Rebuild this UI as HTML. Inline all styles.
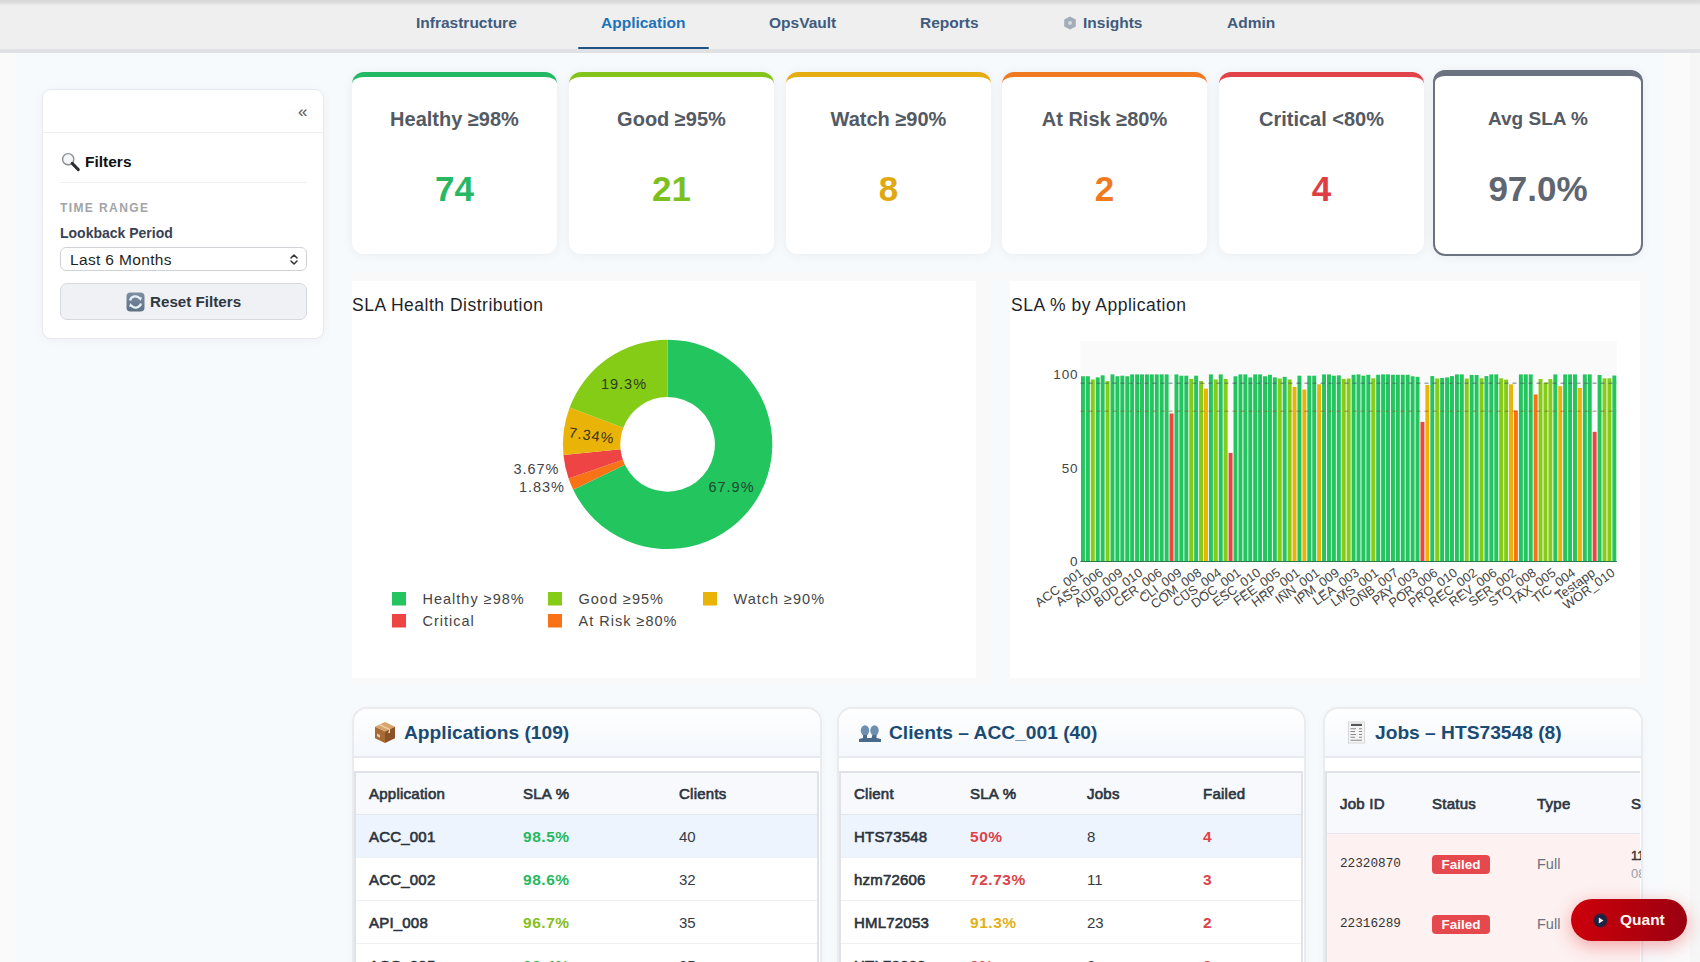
<!DOCTYPE html>
<html><head><meta charset="utf-8"><style>
*{box-sizing:border-box;margin:0;padding:0}
html,body{width:1700px;height:962px;overflow:hidden;background:#fafafa;font-family:"Liberation Sans",sans-serif;color:#222}
.abs{position:absolute}
#main{position:absolute;left:16px;top:0;width:1648px;height:962px;background:#f7fafd}
#nav{position:absolute;left:0;top:0;width:1700px;height:53px;background:linear-gradient(#d8d8d8 0,#dbdbdb 2px,#ececec 5px,#efefef 7px);border-bottom:4px solid #dfe1e4}
.tab{position:absolute;top:14px;font-size:15.5px;font-weight:bold;color:#3f5b7d;white-space:nowrap;line-height:18px}
.tab.active{color:#1c73b9}
#uline{position:absolute;left:578px;top:46.5px;width:131px;height:2.6px;background:#1e5485;border-radius:2px}
#side{position:absolute;left:42px;top:89px;width:282px;height:250px;background:#fff;border:1px solid #e6e9ed;border-radius:9px;box-shadow:0 2px 12px rgba(0,0,0,.04)}
.kpi{position:absolute;top:72px;width:205px;height:182px;background:#fff;border-radius:12px;border-top:5px solid #22c55e;box-shadow:0 1px 12px rgba(0,0,0,.06)}
.kpi .t{position:absolute;left:0;right:0;top:31px;text-align:center;font-size:20px;font-weight:bold;color:#535a64;white-space:nowrap;line-height:23px}
.kpi .v{position:absolute;left:0;right:0;top:92px;text-align:center;font-size:35px;font-weight:bold;white-space:nowrap;line-height:39px}
.panel{position:absolute;background:#fff}
.ptitle{position:absolute;font-size:17.5px;letter-spacing:0.5px;color:#1f1f2a;white-space:nowrap;line-height:20px}
.card{position:absolute;top:707px;height:300px;background:#fff;border:2px solid #e9ebee;border-radius:15px;overflow:hidden;box-shadow:0 2px 8px rgba(0,0,0,.03)}
.chead{position:absolute;left:0;top:0;right:0;height:49px;background:linear-gradient(#fefeff,#f4f8fc);border-bottom:2px solid #e6e9ed}
.ctitle{position:absolute;left:50px;top:13px;font-size:19.2px;font-weight:bold;color:#1b4a73;white-space:nowrap;line-height:22px}
.tbl{position:absolute;left:0;top:62px;right:1px;height:260px;border-top:2px solid #dfe3e8;border-left:2px solid #dfe3e8;border-right:2px solid #dfe3e8}
.th{position:absolute;left:0;right:0;top:0;height:42px;background:#f7f9fc;border-bottom:1px solid #e3e7ec}
.tr{position:absolute;left:0;right:0;height:43px;border-bottom:1px solid #eef1f4;background:#fff}
.tr.sel{background:#edf4fd}
.c{position:absolute;top:13px;font-size:15px;line-height:17px;color:#333b46;white-space:nowrap}
.th .c{font-weight:normal;-webkit-text-stroke:0.65px #2d3540;letter-spacing:0.25px;color:#2d3540;top:12px}
.badge{position:absolute;height:19px;width:58px;background:#e5484d;border-radius:4px;color:#fff;font-weight:bold;font-size:13.5px;line-height:19px;text-align:center}
#quant{position:absolute;left:1571px;top:899px;width:116px;height:42px;border-radius:21px;background:linear-gradient(90deg,#cc000b,#b0000e 60%,#9a0010);box-shadow:0 5px 18px rgba(235,40,40,.38)}
</style></head>
<body>
<div id="main"></div><div class="abs" style="left:1690px;top:0;width:10px;height:962px;background:#f6f6f6"></div>
<div id="nav">
  <div class="tab" style="left:416px">Infrastructure</div>
  <div class="tab active" style="left:601px">Application</div>
  <div class="tab" style="left:769px">OpsVault</div>
  <div class="tab" style="left:920px">Reports</div>
  <svg class="abs" style="left:1063px;top:15.5px" width="14" height="14" viewBox="0 0 14 14"><path d="M7 0.5 L12.8 3.6 L12.8 10.4 L7 13.5 L1.2 10.4 L1.2 3.6 Z" fill="#a3adba"/><circle cx="7" cy="7" r="2" fill="#d3d9e0"/></svg>
  <div class="tab" style="left:1083px">Insights</div>
  <div class="tab" style="left:1227px">Admin</div>
  <div id="uline"></div>
</div>
<div id="side">
  <div class="abs" style="left:255px;top:12px;font-size:17px;color:#555;line-height:20px">&laquo;</div>
  <div class="abs" style="left:0;top:42px;width:280px;height:1px;background:#eef0f2"></div>
  <svg class="abs" style="left:18px;top:62px" width="20" height="20" viewBox="0 0 20 20">
    <circle cx="7.2" cy="7.2" r="5.6" fill="#f4f6f8" stroke="#8a8f95" stroke-width="1.4"/>
    <path d="M11.2 11.4 L17.3 17.6" stroke="#2b2f33" stroke-width="3" stroke-linecap="round"/>
  </svg>
  <div class="abs" style="left:42px;top:63px;font-size:15.5px;font-weight:bold;color:#111;line-height:18px">Filters</div>
  <div class="abs" style="left:17px;top:92px;width:247px;height:1px;background:#eef0f2"></div>
  <div class="abs" style="left:17px;top:111px;font-size:12px;font-weight:bold;color:#a2a4a8;letter-spacing:1.4px;line-height:14px">TIME RANGE</div>
  <div class="abs" style="left:17px;top:135px;font-size:14px;font-weight:bold;color:#374151;line-height:16px">Lookback Period</div>
  <div class="abs" style="left:17px;top:157px;width:247px;height:24px;border:1px solid #cfd3d8;border-radius:6px;background:#fff">
    <div class="abs" style="left:9px;top:2.5px;font-size:15.5px;letter-spacing:0.35px;color:#1f1f1f;line-height:17px">Last 6 Months</div>
    <svg class="abs" style="left:228px;top:5px" width="10" height="13" viewBox="0 0 10 13"><path d="M2 5 L5 2 L8 5 M2 8 L5 11 L8 8" fill="none" stroke="#333" stroke-width="1.5" stroke-linecap="round" stroke-linejoin="round"/></svg>
  </div>
  <div class="abs" style="left:17px;top:193px;width:247px;height:37px;border:1px solid #d6dade;border-radius:7px;background:#eff1f4">
    <svg class="abs" style="left:65px;top:8px" width="19" height="20" viewBox="0 0 19 20">
      <defs><linearGradient id="rg" x1="0" y1="0" x2="0" y2="1"><stop offset="0" stop-color="#7d8ea2"/><stop offset="1" stop-color="#5f7185"/></linearGradient></defs>
      <rect x="0.5" y="0.5" width="18" height="19" rx="4" fill="url(#rg)"/>
      <path d="M4 8.5 A5.5 5.5 0 0 1 14 7" fill="none" stroke="#e8f0f8" stroke-width="2.2"/>
      <path d="M15 11.5 A5.5 5.5 0 0 1 5 13" fill="none" stroke="#e8f0f8" stroke-width="2.2"/>
      <path d="M12 5 L16 5.5 L14.5 9 Z M7 15 L3 14.5 L4.5 11 Z" fill="#e8f0f8"/>
    </svg>
    <div class="abs" style="left:89px;top:9px;font-size:15.2px;font-weight:bold;color:#2f3742;line-height:17px">Reset Filters</div>
  </div>
</div>
<div class="kpi" style="left:352px;border-top-color:#22b864"><div class="t">Healthy ≥98%</div><div class="v" style="color:#27b862">74</div></div>
<div class="kpi" style="left:569px;border-top-color:#84c41a"><div class="t">Good ≥95%</div><div class="v" style="color:#7cc01e">21</div></div>
<div class="kpi" style="left:786px;border-top-color:#e5ad12"><div class="t">Watch ≥90%</div><div class="v" style="color:#e0a80c">8</div></div>
<div class="kpi" style="left:1002px;border-top-color:#f07a22"><div class="t">At Risk ≥80%</div><div class="v" style="color:#ef7a1f">2</div></div>
<div class="kpi" style="left:1219px;border-top-color:#e0434a"><div class="t">Critical &lt;80%</div><div class="v" style="color:#de3d44">4</div></div>
<div class="kpi" style="left:1433px;top:70px;width:210px;height:186px;border:2px solid #6b7280;border-top:6px solid #6b7280"><div class="t" style="top:30.5px;font-size:19px">Avg SLA %</div><div class="v" style="top:93px;color:#5f6670">97.0%</div></div>
<div class="abs" style="left:352px;top:271px;width:1296px;height:416px;background:linear-gradient(#f9f9f9 0,#f9f9f9 410px,#f7fafd 416px)"></div>
<div class="abs" style="left:992px;top:281px;width:16px;height:406px;background:#f7fafd"></div>
<div class="abs" style="left:1648px;top:271px;width:16px;height:416px;background:#f7fafd"></div>
<div class="panel" style="left:352px;top:281px;width:624px;height:397px"><div class="abs" style="left:0;top:1px"><svg class="abs" style="left:0;top:0" width="626" height="394" viewBox="0 0 626 394"><path d="M315.60 57.70 A104.7 104.7 0 1 1 221.18 207.63 L272.94 182.83 A47.3 47.3 0 1 0 315.60 115.10 Z" fill="#22c55e" stroke="#fff" stroke-width="0"/><path d="M221.18 207.63 A104.7 104.7 0 0 1 216.60 196.47 L270.87 177.79 A47.3 47.3 0 0 0 272.94 182.83 Z" fill="#f97316" stroke="#fff" stroke-width="0"/><path d="M216.60 196.47 A104.7 104.7 0 0 1 211.43 172.94 L268.54 167.16 A47.3 47.3 0 0 0 270.87 177.79 Z" fill="#ef4444" stroke="#fff" stroke-width="0"/><path d="M211.43 172.94 A104.7 104.7 0 0 1 217.62 125.49 L271.34 145.73 A47.3 47.3 0 0 0 268.54 167.16 Z" fill="#eab308" stroke="#fff" stroke-width="0"/><path d="M217.62 125.49 A104.7 104.7 0 0 1 315.60 57.70 L315.60 115.10 A47.3 47.3 0 0 0 271.34 145.73 Z" fill="#84cc16" stroke="#fff" stroke-width="0"/><text x="272" y="106.5" text-anchor="middle" fill="#2f3a1f" style="font-family:Liberation Sans,sans-serif;font-size:14.5px;letter-spacing:1.0px">19.3%</text><text x="239" y="158.5" text-anchor="middle" fill="#3a3210" style="font-family:Liberation Sans,sans-serif;font-size:14.5px;letter-spacing:1.0px" transform="rotate(8 239 158.5)">7.34%</text><text x="207.5" y="191.5" text-anchor="end" fill="#444" style="font-family:Liberation Sans,sans-serif;font-size:14.5px;letter-spacing:1.0px">3.67%</text><text x="213" y="209.5" text-anchor="end" fill="#444" style="font-family:Liberation Sans,sans-serif;font-size:14.5px;letter-spacing:1.0px">1.83%</text><text x="379.5" y="210" text-anchor="middle" fill="#1f4a2e" style="font-family:Liberation Sans,sans-serif;font-size:14.5px;letter-spacing:1.0px">67.9%</text><rect x="40" y="310" width="14" height="13.5" fill="#22c55e"/><text x="70.5" y="322.3" text-anchor="start" fill="#444" style="font-family:Liberation Sans,sans-serif;font-size:14.5px;letter-spacing:1.0px">Healthy ≥98%</text><rect x="196" y="310" width="14" height="13.5" fill="#84cc16"/><text x="226.5" y="322.3" text-anchor="start" fill="#444" style="font-family:Liberation Sans,sans-serif;font-size:14.5px;letter-spacing:1.0px">Good ≥95%</text><rect x="351" y="310" width="14" height="13.5" fill="#eab308"/><text x="381.5" y="322.3" text-anchor="start" fill="#444" style="font-family:Liberation Sans,sans-serif;font-size:14.5px;letter-spacing:1.0px">Watch ≥90%</text><rect x="40" y="332" width="14" height="13.5" fill="#ef4444"/><text x="70.5" y="344.3" text-anchor="start" fill="#444" style="font-family:Liberation Sans,sans-serif;font-size:14.5px;letter-spacing:1.0px">Critical</text><rect x="196" y="332" width="14" height="13.5" fill="#f97316"/><text x="226.5" y="344.3" text-anchor="start" fill="#444" style="font-family:Liberation Sans,sans-serif;font-size:14.5px;letter-spacing:1.0px">At Risk ≥80%</text></svg></div><div class="ptitle" style="left:0;top:14px">SLA Health Distribution</div></div>
<div class="panel" style="left:1010px;top:281px;width:630px;height:397px"><div class="abs" style="left:0;top:1px"><svg class="abs" style="left:0;top:0" width="631" height="394" viewBox="0 0 631 394"><rect x="70.5" y="59" width="536.3" height="220.5" fill="#fafafa"/><rect x="70.99" y="94.27" width="3.94" height="185.23" fill="#22c55e"/><rect x="75.91" y="94.27" width="3.94" height="185.23" fill="#22c55e"/><rect x="80.83" y="97.45" width="3.94" height="182.05" fill="#84cc16"/><rect x="85.75" y="95.39" width="3.94" height="184.11" fill="#22c55e"/><rect x="90.67" y="93.34" width="3.94" height="186.16" fill="#22c55e"/><rect x="95.59" y="99.14" width="3.94" height="180.36" fill="#84cc16"/><rect x="100.51" y="92.40" width="3.94" height="187.10" fill="#22c55e"/><rect x="105.43" y="94.27" width="3.94" height="185.23" fill="#22c55e"/><rect x="110.35" y="93.71" width="3.94" height="185.79" fill="#22c55e"/><rect x="115.27" y="94.27" width="3.94" height="185.23" fill="#22c55e"/><rect x="120.19" y="92.40" width="3.94" height="187.10" fill="#22c55e"/><rect x="125.11" y="92.40" width="3.94" height="187.10" fill="#22c55e"/><rect x="130.03" y="92.40" width="3.94" height="187.10" fill="#22c55e"/><rect x="134.95" y="92.40" width="3.94" height="187.10" fill="#22c55e"/><rect x="139.87" y="92.40" width="3.94" height="187.10" fill="#22c55e"/><rect x="144.79" y="92.40" width="3.94" height="187.10" fill="#22c55e"/><rect x="149.71" y="92.40" width="3.94" height="187.10" fill="#22c55e"/><rect x="154.64" y="92.40" width="3.94" height="187.10" fill="#22c55e"/><rect x="159.56" y="131.50" width="3.94" height="148.00" fill="#ef4444"/><rect x="164.48" y="92.40" width="3.94" height="187.10" fill="#22c55e"/><rect x="169.40" y="93.71" width="3.94" height="185.79" fill="#22c55e"/><rect x="174.32" y="93.71" width="3.94" height="185.79" fill="#22c55e"/><rect x="179.24" y="96.89" width="3.94" height="182.61" fill="#84cc16"/><rect x="184.16" y="93.71" width="3.94" height="185.79" fill="#22c55e"/><rect x="189.08" y="99.14" width="3.94" height="180.36" fill="#84cc16"/><rect x="194.00" y="106.62" width="3.94" height="172.88" fill="#eab308"/><rect x="198.92" y="92.40" width="3.94" height="187.10" fill="#22c55e"/><rect x="203.84" y="97.45" width="3.94" height="182.05" fill="#84cc16"/><rect x="208.76" y="92.40" width="3.94" height="187.10" fill="#22c55e"/><rect x="213.68" y="96.89" width="3.94" height="182.61" fill="#84cc16"/><rect x="218.60" y="170.98" width="3.94" height="108.52" fill="#ef4444"/><rect x="223.52" y="94.27" width="3.94" height="185.23" fill="#22c55e"/><rect x="228.44" y="92.40" width="3.94" height="187.10" fill="#22c55e"/><rect x="233.36" y="92.40" width="3.94" height="187.10" fill="#22c55e"/><rect x="238.28" y="95.39" width="3.94" height="184.11" fill="#22c55e"/><rect x="243.20" y="92.40" width="3.94" height="187.10" fill="#22c55e"/><rect x="248.12" y="92.40" width="3.94" height="187.10" fill="#22c55e"/><rect x="253.04" y="94.27" width="3.94" height="185.23" fill="#22c55e"/><rect x="257.96" y="92.77" width="3.94" height="186.73" fill="#22c55e"/><rect x="262.88" y="95.39" width="3.94" height="184.11" fill="#22c55e"/><rect x="267.80" y="96.52" width="3.94" height="182.98" fill="#84cc16"/><rect x="272.72" y="94.83" width="3.94" height="184.67" fill="#22c55e"/><rect x="277.64" y="97.45" width="3.94" height="182.05" fill="#84cc16"/><rect x="282.56" y="104.94" width="3.94" height="174.56" fill="#eab308"/><rect x="287.48" y="93.71" width="3.94" height="185.79" fill="#22c55e"/><rect x="292.40" y="107.56" width="3.94" height="171.94" fill="#eab308"/><rect x="297.32" y="93.71" width="3.94" height="185.79" fill="#22c55e"/><rect x="302.24" y="93.71" width="3.94" height="185.79" fill="#22c55e"/><rect x="307.16" y="102.32" width="3.94" height="177.18" fill="#eab308"/><rect x="312.08" y="92.40" width="3.94" height="187.10" fill="#22c55e"/><rect x="317.00" y="92.40" width="3.94" height="187.10" fill="#22c55e"/><rect x="321.92" y="93.71" width="3.94" height="185.79" fill="#22c55e"/><rect x="326.84" y="93.34" width="3.94" height="186.16" fill="#22c55e"/><rect x="331.76" y="96.89" width="3.94" height="182.61" fill="#84cc16"/><rect x="336.68" y="96.52" width="3.94" height="182.98" fill="#84cc16"/><rect x="341.60" y="92.77" width="3.94" height="186.73" fill="#22c55e"/><rect x="346.52" y="92.40" width="3.94" height="187.10" fill="#22c55e"/><rect x="351.44" y="93.71" width="3.94" height="185.79" fill="#22c55e"/><rect x="356.36" y="92.77" width="3.94" height="186.73" fill="#22c55e"/><rect x="361.28" y="96.33" width="3.94" height="183.17" fill="#84cc16"/><rect x="366.20" y="92.77" width="3.94" height="186.73" fill="#22c55e"/><rect x="371.12" y="92.40" width="3.94" height="187.10" fill="#22c55e"/><rect x="376.04" y="92.40" width="3.94" height="187.10" fill="#22c55e"/><rect x="380.96" y="92.77" width="3.94" height="186.73" fill="#22c55e"/><rect x="385.88" y="92.77" width="3.94" height="186.73" fill="#22c55e"/><rect x="390.80" y="92.77" width="3.94" height="186.73" fill="#22c55e"/><rect x="395.72" y="92.77" width="3.94" height="186.73" fill="#22c55e"/><rect x="400.64" y="94.27" width="3.94" height="185.23" fill="#22c55e"/><rect x="405.56" y="94.83" width="3.94" height="184.67" fill="#22c55e"/><rect x="410.48" y="139.92" width="3.94" height="139.58" fill="#ef4444"/><rect x="415.40" y="103.06" width="3.94" height="176.44" fill="#eab308"/><rect x="420.33" y="94.08" width="3.94" height="185.42" fill="#22c55e"/><rect x="425.25" y="96.52" width="3.94" height="182.98" fill="#84cc16"/><rect x="430.17" y="95.95" width="3.94" height="183.55" fill="#22c55e"/><rect x="435.09" y="95.39" width="3.94" height="184.11" fill="#22c55e"/><rect x="440.01" y="94.08" width="3.94" height="185.42" fill="#22c55e"/><rect x="444.93" y="92.40" width="3.94" height="187.10" fill="#22c55e"/><rect x="449.85" y="92.40" width="3.94" height="187.10" fill="#22c55e"/><rect x="454.77" y="96.52" width="3.94" height="182.98" fill="#84cc16"/><rect x="459.69" y="92.96" width="3.94" height="186.54" fill="#22c55e"/><rect x="464.61" y="92.96" width="3.94" height="186.54" fill="#22c55e"/><rect x="469.53" y="96.33" width="3.94" height="183.17" fill="#84cc16"/><rect x="474.45" y="94.08" width="3.94" height="185.42" fill="#22c55e"/><rect x="479.37" y="92.40" width="3.94" height="187.10" fill="#22c55e"/><rect x="484.29" y="92.40" width="3.94" height="187.10" fill="#22c55e"/><rect x="489.21" y="96.33" width="3.94" height="183.17" fill="#84cc16"/><rect x="494.13" y="97.64" width="3.94" height="181.86" fill="#84cc16"/><rect x="499.05" y="102.32" width="3.94" height="177.18" fill="#eab308"/><rect x="503.97" y="128.51" width="3.94" height="150.99" fill="#f97316"/><rect x="508.89" y="92.40" width="3.94" height="187.10" fill="#22c55e"/><rect x="513.81" y="92.40" width="3.94" height="187.10" fill="#22c55e"/><rect x="518.73" y="92.40" width="3.94" height="187.10" fill="#22c55e"/><rect x="523.65" y="112.42" width="3.94" height="167.08" fill="#f97316"/><rect x="528.57" y="97.08" width="3.94" height="182.42" fill="#84cc16"/><rect x="533.49" y="100.63" width="3.94" height="178.87" fill="#84cc16"/><rect x="538.41" y="97.08" width="3.94" height="182.42" fill="#84cc16"/><rect x="543.33" y="92.40" width="3.94" height="187.10" fill="#22c55e"/><rect x="548.25" y="104.19" width="3.94" height="175.31" fill="#eab308"/><rect x="553.17" y="92.40" width="3.94" height="187.10" fill="#22c55e"/><rect x="558.09" y="92.40" width="3.94" height="187.10" fill="#22c55e"/><rect x="563.01" y="92.40" width="3.94" height="187.10" fill="#22c55e"/><rect x="567.93" y="105.87" width="3.94" height="173.63" fill="#eab308"/><rect x="572.85" y="92.40" width="3.94" height="187.10" fill="#22c55e"/><rect x="577.77" y="92.40" width="3.94" height="187.10" fill="#22c55e"/><rect x="582.69" y="149.84" width="3.94" height="129.66" fill="#ef4444"/><rect x="587.61" y="92.96" width="3.94" height="186.54" fill="#22c55e"/><rect x="592.53" y="96.33" width="3.94" height="183.17" fill="#84cc16"/><rect x="597.45" y="96.33" width="3.94" height="183.17" fill="#84cc16"/><rect x="602.37" y="93.52" width="3.94" height="185.98" fill="#22c55e"/><line x1="70.5" x2="606.8" y1="101.19999999999999" y2="101.19999999999999" stroke="#4a5060" stroke-opacity="0.5" stroke-width="1.6" stroke-dasharray="4 4"/><line x1="70.5" x2="606.8" y1="129.3" y2="129.3" stroke="#8a5a2a" stroke-opacity="0.45" stroke-width="1.6" stroke-dasharray="4 4"/><line x1="70.5" x2="606.8" y1="279.5" y2="279.5" stroke="#2a7a4a" stroke-width="1.2"/><text x="68.5" y="97.19999999999999" text-anchor="end" fill="#444" style="font-family:Liberation Sans,sans-serif;font-size:13.5px;letter-spacing:0.9px">100</text><text x="68.5" y="190.8" text-anchor="end" fill="#444" style="font-family:Liberation Sans,sans-serif;font-size:13.5px;letter-spacing:0.9px">50</text><text x="68.5" y="284.4" text-anchor="end" fill="#444" style="font-family:Liberation Sans,sans-serif;font-size:13.5px;letter-spacing:0.9px">0</text><text x="74.46" y="292.50" text-anchor="end" fill="#444" style="font-family:Liberation Sans,sans-serif;font-size:12.8px;letter-spacing:0.1px" transform="rotate(-36 74.46 292.50)">ACC_001</text><text x="94.14" y="292.50" text-anchor="end" fill="#444" style="font-family:Liberation Sans,sans-serif;font-size:12.8px;letter-spacing:0.1px" transform="rotate(-36 94.14 292.50)">ASS_006</text><text x="113.82" y="292.50" text-anchor="end" fill="#444" style="font-family:Liberation Sans,sans-serif;font-size:12.8px;letter-spacing:0.1px" transform="rotate(-36 113.82 292.50)">AUD_009</text><text x="133.50" y="292.50" text-anchor="end" fill="#444" style="font-family:Liberation Sans,sans-serif;font-size:12.8px;letter-spacing:0.1px" transform="rotate(-36 133.50 292.50)">BUD_010</text><text x="153.18" y="292.50" text-anchor="end" fill="#444" style="font-family:Liberation Sans,sans-serif;font-size:12.8px;letter-spacing:0.1px" transform="rotate(-36 153.18 292.50)">CER_006</text><text x="172.86" y="292.50" text-anchor="end" fill="#444" style="font-family:Liberation Sans,sans-serif;font-size:12.8px;letter-spacing:0.1px" transform="rotate(-36 172.86 292.50)">CLI_009</text><text x="192.54" y="292.50" text-anchor="end" fill="#444" style="font-family:Liberation Sans,sans-serif;font-size:12.8px;letter-spacing:0.1px" transform="rotate(-36 192.54 292.50)">COM_008</text><text x="212.23" y="292.50" text-anchor="end" fill="#444" style="font-family:Liberation Sans,sans-serif;font-size:12.8px;letter-spacing:0.1px" transform="rotate(-36 212.23 292.50)">CUS_004</text><text x="231.91" y="292.50" text-anchor="end" fill="#444" style="font-family:Liberation Sans,sans-serif;font-size:12.8px;letter-spacing:0.1px" transform="rotate(-36 231.91 292.50)">DOC_001</text><text x="251.59" y="292.50" text-anchor="end" fill="#444" style="font-family:Liberation Sans,sans-serif;font-size:12.8px;letter-spacing:0.1px" transform="rotate(-36 251.59 292.50)">ESC_010</text><text x="271.27" y="292.50" text-anchor="end" fill="#444" style="font-family:Liberation Sans,sans-serif;font-size:12.8px;letter-spacing:0.1px" transform="rotate(-36 271.27 292.50)">FEE_005</text><text x="290.95" y="292.50" text-anchor="end" fill="#444" style="font-family:Liberation Sans,sans-serif;font-size:12.8px;letter-spacing:0.1px" transform="rotate(-36 290.95 292.50)">HRP_001</text><text x="310.63" y="292.50" text-anchor="end" fill="#444" style="font-family:Liberation Sans,sans-serif;font-size:12.8px;letter-spacing:0.1px" transform="rotate(-36 310.63 292.50)">INN_001</text><text x="330.31" y="292.50" text-anchor="end" fill="#444" style="font-family:Liberation Sans,sans-serif;font-size:12.8px;letter-spacing:0.1px" transform="rotate(-36 330.31 292.50)">IPM_009</text><text x="349.99" y="292.50" text-anchor="end" fill="#444" style="font-family:Liberation Sans,sans-serif;font-size:12.8px;letter-spacing:0.1px" transform="rotate(-36 349.99 292.50)">LEA_003</text><text x="369.67" y="292.50" text-anchor="end" fill="#444" style="font-family:Liberation Sans,sans-serif;font-size:12.8px;letter-spacing:0.1px" transform="rotate(-36 369.67 292.50)">LMS_001</text><text x="389.35" y="292.50" text-anchor="end" fill="#444" style="font-family:Liberation Sans,sans-serif;font-size:12.8px;letter-spacing:0.1px" transform="rotate(-36 389.35 292.50)">ONB_007</text><text x="409.03" y="292.50" text-anchor="end" fill="#444" style="font-family:Liberation Sans,sans-serif;font-size:12.8px;letter-spacing:0.1px" transform="rotate(-36 409.03 292.50)">PAY_003</text><text x="428.71" y="292.50" text-anchor="end" fill="#444" style="font-family:Liberation Sans,sans-serif;font-size:12.8px;letter-spacing:0.1px" transform="rotate(-36 428.71 292.50)">POR_006</text><text x="448.39" y="292.50" text-anchor="end" fill="#444" style="font-family:Liberation Sans,sans-serif;font-size:12.8px;letter-spacing:0.1px" transform="rotate(-36 448.39 292.50)">PRO_010</text><text x="468.07" y="292.50" text-anchor="end" fill="#444" style="font-family:Liberation Sans,sans-serif;font-size:12.8px;letter-spacing:0.1px" transform="rotate(-36 468.07 292.50)">REC_002</text><text x="487.76" y="292.50" text-anchor="end" fill="#444" style="font-family:Liberation Sans,sans-serif;font-size:12.8px;letter-spacing:0.1px" transform="rotate(-36 487.76 292.50)">REV_006</text><text x="507.44" y="292.50" text-anchor="end" fill="#444" style="font-family:Liberation Sans,sans-serif;font-size:12.8px;letter-spacing:0.1px" transform="rotate(-36 507.44 292.50)">SER_002</text><text x="527.12" y="292.50" text-anchor="end" fill="#444" style="font-family:Liberation Sans,sans-serif;font-size:12.8px;letter-spacing:0.1px" transform="rotate(-36 527.12 292.50)">STO_008</text><text x="546.80" y="292.50" text-anchor="end" fill="#444" style="font-family:Liberation Sans,sans-serif;font-size:12.8px;letter-spacing:0.1px" transform="rotate(-36 546.80 292.50)">TAX_005</text><text x="566.48" y="292.50" text-anchor="end" fill="#444" style="font-family:Liberation Sans,sans-serif;font-size:12.8px;letter-spacing:0.1px" transform="rotate(-36 566.48 292.50)">TIC_004</text><text x="586.16" y="292.50" text-anchor="end" fill="#444" style="font-family:Liberation Sans,sans-serif;font-size:12.8px;letter-spacing:0.1px" transform="rotate(-36 586.16 292.50)">Testapp</text><text x="605.84" y="292.50" text-anchor="end" fill="#444" style="font-family:Liberation Sans,sans-serif;font-size:12.8px;letter-spacing:0.1px" transform="rotate(-36 605.84 292.50)">WOR_010</text></svg></div><div class="ptitle" style="left:1px;top:14px">SLA % by Application</div></div>
<div class="card" style="left:352px;width:470px"><div class="chead"><svg class="abs" style="left:19px;top:10.5px" width="24" height="25" viewBox="0 0 24 24" preserveAspectRatio="none"><path d="M2 6.5 L12 2 L22 6.5 L12 11 Z" fill="#d8a46a"/><path d="M2 6.5 L12 11 L12 22 L2 17.5 Z" fill="#a86a34"/><path d="M22 6.5 L12 11 L12 22 L22 17.5 Z" fill="#8a5226"/><path d="M6.5 4.5 L16.5 9 L16.5 12 L15 11.5" fill="none" stroke="#f0d2a8" stroke-width="1.2"/><path d="M4 13 L7 14.5 L7 17 L4 15.5 Z" fill="#e8e8e8" opacity=".8"/></svg><div class="ctitle">Applications (109)</div></div><div class="tbl"><div class="th" style="top:0px"><div class="c" style="left:13px;">Application</div><div class="c" style="left:167px;">SLA %</div><div class="c" style="left:323px;">Clients</div></div><div class="tr sel" style="top:42px"><div class="c" style="left:13px;font-weight:normal;-webkit-text-stroke:0.6px #2a323c;color:#2a323c;letter-spacing:0.2px">ACC_001</div><div class="c" style="left:167px;color:#27b85f;font-weight:bold;letter-spacing:0.55px;font-size:15.5px;top:12.5px">98.5%</div><div class="c" style="left:323px;">40</div></div><div class="tr" style="top:85px"><div class="c" style="left:13px;font-weight:normal;-webkit-text-stroke:0.6px #2a323c;color:#2a323c;letter-spacing:0.2px">ACC_002</div><div class="c" style="left:167px;color:#27b85f;font-weight:bold;letter-spacing:0.55px;font-size:15.5px;top:12.5px">98.6%</div><div class="c" style="left:323px;">32</div></div><div class="tr" style="top:128px"><div class="c" style="left:13px;font-weight:normal;-webkit-text-stroke:0.6px #2a323c;color:#2a323c;letter-spacing:0.2px">API_008</div><div class="c" style="left:167px;color:#86c01a;font-weight:bold;letter-spacing:0.55px;font-size:15.5px;top:12.5px">96.7%</div><div class="c" style="left:323px;">35</div></div><div class="tr" style="top:171px"><div class="c" style="left:13px;font-weight:normal;-webkit-text-stroke:0.6px #2a323c;color:#2a323c;letter-spacing:0.2px">ACC_005</div><div class="c" style="left:167px;color:#27b85f;font-weight:bold;letter-spacing:0.55px;font-size:15.5px;top:12.5px">98.4%</div><div class="c" style="left:323px;">35</div></div></div></div>
<div class="card" style="left:837px;width:469px"><div class="chead"><svg class="abs" style="left:19px;top:15px" width="24" height="20" viewBox="0 0 24 20"><ellipse cx="7" cy="6.5" rx="4.2" ry="5.2" fill="#6f8fb0"/><ellipse cx="16.5" cy="6.5" rx="4.2" ry="5.2" fill="#6f8fb0"/><path d="M5 11 L9 11 L9 14 L13.5 14 L14.5 11 L18.5 11 L18.5 14 L23 15 L23 18 L1 18 L1 15 L5 14 Z" fill="#4a6a8c"/></svg><div class="ctitle">Clients – ACC_001 (40)</div></div><div class="tbl"><div class="th" style="top:0px"><div class="c" style="left:13px;">Client</div><div class="c" style="left:129px;">SLA %</div><div class="c" style="left:246px;">Jobs</div><div class="c" style="left:362px;">Failed</div></div><div class="tr sel" style="top:42px"><div class="c" style="left:13px;font-weight:normal;-webkit-text-stroke:0.6px #2a323c;color:#2a323c;letter-spacing:0.2px">HTS73548</div><div class="c" style="left:129px;color:#dd434a;font-weight:bold;letter-spacing:0.55px;font-size:15.5px;top:12.5px">50%</div><div class="c" style="left:246px;">8</div><div class="c" style="left:362px;color:#dd434a;font-weight:bold;letter-spacing:0.55px;font-size:15.5px;top:12.5px">4</div></div><div class="tr" style="top:85px"><div class="c" style="left:13px;font-weight:normal;-webkit-text-stroke:0.6px #2a323c;color:#2a323c;letter-spacing:0.2px">hzm72606</div><div class="c" style="left:129px;color:#dd434a;font-weight:bold;letter-spacing:0.55px;font-size:15.5px;top:12.5px">72.73%</div><div class="c" style="left:246px;">11</div><div class="c" style="left:362px;color:#dd434a;font-weight:bold;letter-spacing:0.55px;font-size:15.5px;top:12.5px">3</div></div><div class="tr" style="top:128px"><div class="c" style="left:13px;font-weight:normal;-webkit-text-stroke:0.6px #2a323c;color:#2a323c;letter-spacing:0.2px">HML72053</div><div class="c" style="left:129px;color:#e2b015;font-weight:bold;letter-spacing:0.55px;font-size:15.5px;top:12.5px">91.3%</div><div class="c" style="left:246px;">23</div><div class="c" style="left:362px;color:#dd434a;font-weight:bold;letter-spacing:0.55px;font-size:15.5px;top:12.5px">2</div></div><div class="tr" style="top:171px"><div class="c" style="left:13px;font-weight:normal;-webkit-text-stroke:0.6px #2a323c;color:#2a323c;letter-spacing:0.2px">HTL72666</div><div class="c" style="left:129px;color:#dd434a;font-weight:bold;letter-spacing:0.55px;font-size:15.5px;top:12.5px">0%</div><div class="c" style="left:246px;">2</div><div class="c" style="left:362px;color:#dd434a;font-weight:bold;letter-spacing:0.55px;font-size:15.5px;top:12.5px">2</div></div></div></div>
<div class="card" style="left:1323px;width:320px"><div class="chead"><svg class="abs" style="left:22px;top:11.5px" width="19" height="23" viewBox="0 0 19 24" preserveAspectRatio="none"><rect x="1.5" y="1" width="16" height="22" fill="#f4f4f4" stroke="#cfcfcf" stroke-width="0.8"/><rect x="4" y="3" width="11" height="2.2" fill="#555"/><path d="M3.5 8 H9 M3.5 11 H8 M3.5 14 H9 M3.5 17 H8 M12 8 H15 M12 11 H15 M12 14 H15 M12 17 H15 M3.5 20 H15" stroke="#8a8a8a" stroke-width="1.1"/></svg><div class="ctitle">Jobs – HTS73548 (8)</div></div><div class="tbl" style="border-right:0">
<div class="th" style="height:61px"><div class="c" style="left:13px;top:22px">Job ID</div><div class="c" style="left:105px;top:22px">Status</div><div class="c" style="left:210px;top:22px">Type</div><div class="c" style="left:304px;top:22px">St</div></div>
<div class="tr" style="top:61px;height:60px;background:#fdf1f1;border-bottom:0"><div class="c" style="left:13px;top:21px;font-family:'Liberation Mono',monospace;font-size:12.7px;color:#333">22320870</div><div class="badge" style="left:105px;top:21px">Failed</div><div class="c" style="left:210px;top:22px;color:#6b7280;font-size:14.5px">Full</div><div class="c" style="left:304px;top:13px;font-size:13px;-webkit-text-stroke:0.4px #333;color:#333">11</div><div class="c" style="left:304px;top:31px;font-size:13px;color:#9aa0a6">08</div></div>
<div class="tr" style="top:121px;height:60px;background:#fdf1f1;border-bottom:0"><div class="c" style="left:13px;top:21px;font-family:'Liberation Mono',monospace;font-size:12.7px;color:#333">22316289</div><div class="badge" style="left:105px;top:21px">Failed</div><div class="c" style="left:210px;top:22px;color:#6b7280;font-size:14.5px">Full</div></div>
<div class="tr" style="top:181px;height:80px;background:#fdf1f1;border-bottom:0"></div>
</div></div>

<div id="quant"><svg class="abs" style="left:22px;top:14px" width="15" height="15" viewBox="0 0 15 15"><circle cx="7.5" cy="7.5" r="7" fill="#1d2340" stroke="#8a1020" stroke-width="1"/><path d="M5.8 4.5 L10.5 7.5 L5.8 10.5 Z" fill="#f4f4f4"/></svg><div class="abs" style="left:49px;top:12px;font-size:15.5px;font-weight:bold;color:#fff8f0;line-height:18px">Quant</div></div>
</body></html>
